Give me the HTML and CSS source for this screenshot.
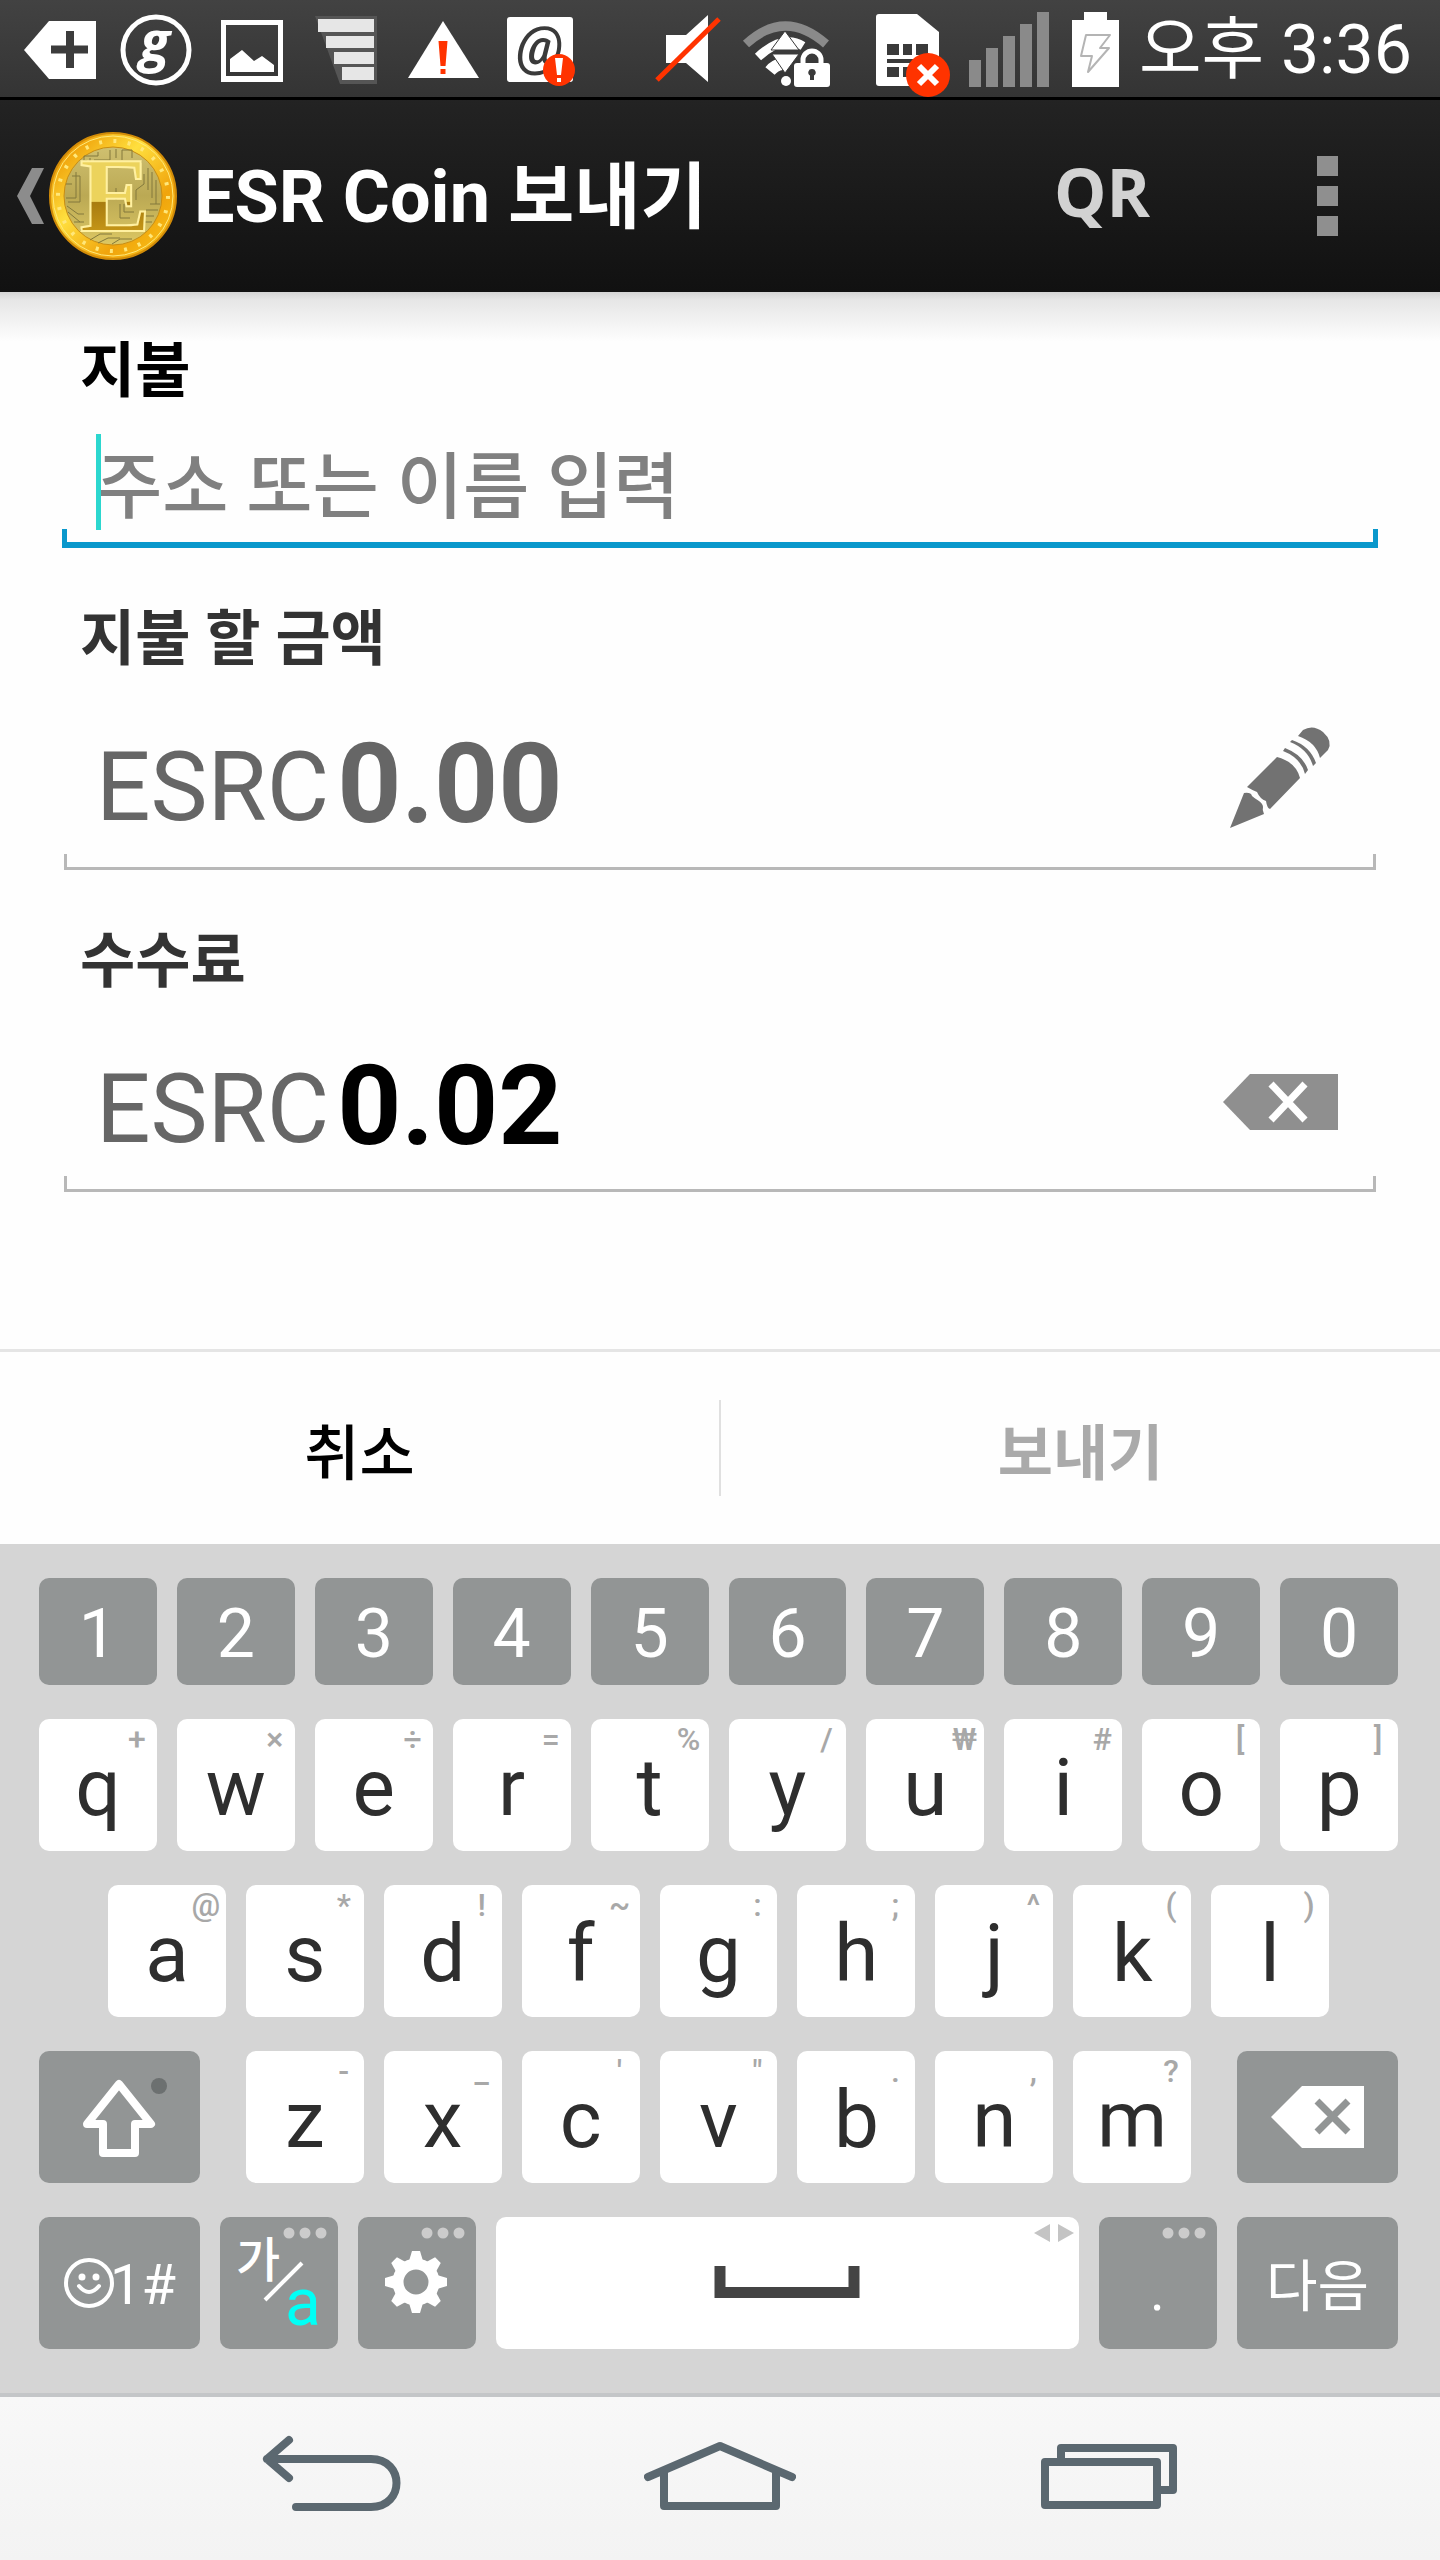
FILE: index.html
```html
<!DOCTYPE html>
<html lang="ko">
<head>
  <meta charset="UTF-8" />
  <meta name="viewport" content="width=device-width, initial-scale=1.0"/>
  <title>ESR Coin 보내기</title>
  <link rel="stylesheet" href="styles.css">
</head>
<body>
  <div class="status-bar">
    <div class="notifications">
      <svg width="72" height="97" viewBox="0 0 72 97">
        <path d="M0 50 25 21H72V79H25Z" fill="#fff"/>
        <path d="M46 31v37M27 49.500h37" stroke="#3c3c3c" stroke-width="8"/>
      </svg>
      <svg width="72" height="97" viewBox="0 0 72 97">
        <circle cx="36" cy="50" r="33" fill="none" stroke="#fff" stroke-width="5"/>
        <text x="35" y="61" class="icon-g">g</text>
      </svg>
      <svg width="72" height="97" viewBox="0 0 72 97">
        <path d="M5 20H67V82H5ZM10 25V76H62V25Z" fill="#fff" fill-rule="evenodd"/>
        <path d="M14 72V59L26 50 38 61 46 56 58 65V72Z" fill="#fff"/>
      </svg>
      <svg width="72" height="97" viewBox="0 0 72 97">
        <path d="M3 16H65V84H28Z" fill="#555"/>
        <path d="M6 19H62V32H6ZM14 36H62V48H14ZM22 52H62V64H22ZM30 67H62V80H30Z" fill="#e6e6e6"/>
      </svg>
      <svg width="72" height="97" viewBox="0 0 72 97">
        <path d="M35 21 71 78H0Z" fill="#fff"/>
        <path d="M30.500 41h9l-2 25h-5ZM32.500 69h5v5h-5Z" fill="#ff3300"/>
      </svg>
      <svg width="74" height="97" viewBox="0 0 74 97">
        <rect x="3" y="17" width="66" height="65" rx="3" fill="#fff"/>
        <text x="36" y="64" class="icon-at">@</text>
        <circle cx="55" cy="70" r="16" fill="#ff3300"/>
        <path d="M51 58h8l-2 17h-4ZM53 78h4v4h-4Z" fill="#fff"/>
      </svg>
    </div>
    <div class="system">
      <svg width="68" height="97" viewBox="0 0 68 97">
        <path d="M11 35H31L53 15V82L31 63H11Z" fill="#fff"/>
        <path d="M2 80 64 19" stroke="#ff3300" stroke-width="5"/>
      </svg>
      <svg width="96" height="97" viewBox="0 0 96 97">
        <path d="M7 44Q46 8 87 44" fill="none" stroke="#8a8a8a" stroke-width="9"/>
        <path d="M19 57Q44 34 64 46" fill="none" stroke="#fff" stroke-width="9"/>
        <path d="M31 71Q36 65 43 64" fill="none" stroke="#fff" stroke-width="12"/>
        <circle cx="47" cy="81" r="5" fill="#fff"/>
        <path d="M46 31 60 50H32ZM33 54H60L46 73Z" fill="#fff" stroke="#3a3a3a" stroke-width="1"/>
        <path d="M64 64V60a9 9 0 0 1 18 0V64" fill="none" stroke="#fff" stroke-width="5"/>
        <rect x="55" y="63" width="36" height="24" rx="3" fill="#fff"/>
        <path d="M73 69a3.500 3.500 0 0 1 2 6.500V80H71V75.500A3.500 3.500 0 0 1 73 69Z" fill="#3a3a3a"/>
      </svg>
      <svg width="102" height="100" viewBox="2 0 102 100">
        <path d="M30 14H68L90 32V83a3 3 0 0 1-3 3H30a3 3 0 0 1-3-3V17a3 3 0 0 1 3-3Z" fill="#fff"/>
        <path d="M38 44h12v11H38ZM54 44h9v11h-9ZM67 44h12v11H67ZM38 59h41v4H38ZM38 67h12v10H38ZM54 67h9v10h-9Z" fill="#3a3a3a"/>
        <circle cx="79" cy="75" r="22" fill="#ff3300"/>
        <path d="M70 66 88 84M88 66 70 84" stroke="#fff" stroke-width="6"/>
      </svg>
      <svg width="80" height="97" viewBox="0 0 80 97">
        <path d="M0 60h12v27H0ZM17 48h12v39H17ZM34 36h12v51H34ZM51 24h12v63H51ZM68 12h12v75H68Z" fill="#8a8a8a"/>
      </svg>
      <svg width="58" height="97" viewBox="0 0 58 97">
        <path d="M7 20H19V12H42V20H54V87H7Z" fill="#fff"/>
        <path d="M21 35H45L35 48H44L23 72 27 56H16Z" fill="none" stroke="#b4b4b4" stroke-width="2" stroke-linejoin="round"/>
      </svg>
      <span class="clock">오후 3:36</span>
    </div>
  </div>

  <header class="action-bar">
    <a class="up" href="#" aria-label="뒤로">
      <svg width="180" height="192" viewBox="0 0 180 192">
        <defs>
          <linearGradient id="gold" x1="0" y1="0" x2="1" y2="1">
            <stop offset="0" stop-color="#fbc81c"/>
            <stop offset=".15" stop-color="#f0a40c"/>
            <stop offset=".4" stop-color="#ffdf3e"/>
            <stop offset=".7" stop-color="#f0a40c"/>
            <stop offset="1" stop-color="#fbc81a"/>
          </linearGradient>
          <linearGradient id="face" x1="0" y1="0" x2="0" y2="1">
            <stop offset="0" stop-color="#cfc070"/>
            <stop offset=".5" stop-color="#bba954"/>
            <stop offset="1" stop-color="#dcc763"/>
          </linearGradient>
          <linearGradient id="letter" x1="0" y1="0" x2="0" y2="1">
            <stop offset=".55" stop-color="#ecd35c"/>
            <stop offset=".56" stop-color="#a87c10"/>
            <stop offset="1" stop-color="#dba91c"/>
          </linearGradient>
        </defs>
        <path d="M32 68H44L30 96 44 124H32L17 96Z" fill="#8c8c8c"/>
        <circle cx="113" cy="96" r="63" fill="url(#gold)" stroke="#d18b08" stroke-width="2"/>
        <circle cx="113" cy="96" r="60" fill="none" stroke="#ffe97a" stroke-width="1"/>
        <circle cx="113" cy="96" r="55" fill="none" stroke="#ffe77a" stroke-width="4" stroke-dasharray="3 11.400"/>
        <circle cx="113" cy="96" r="49" fill="url(#face)" stroke="#c98d12" stroke-width="1"/>
        <g fill="none" stroke="#83793c" stroke-width="1">
          <path d="M72 76H80V102H68M76 72V98H66M66 84H72M84 62V56H98V52M94 60H110V50M116 58V49M122 60V50H132V58M128 62H142"/>
          <path d="M148 68V90M152 72V98M156 80V104M144 74V84L136 90V100M150 104H160M146 110H158M144 116H154M124 66H140V76"/>
          <path d="M67 106 78 114H84M68 112 80 122M74 122H84M80 130H90M90 140 100 134H112M98 143 108 138H120M112 144 120 139H132M132 130 142 122H152"/>
          <path d="M120 104V118H130M124 104V112H134M116 88V100M86 60V66M90 58V64"/>
        </g>
        <text x="115" y="131" class="coin-letter">E</text>
      </svg>
    </a>
    <h1>ESR Coin 보내기</h1>
    <button class="qr" type="button">QR</button>
    <button class="overflow" type="button" aria-label="메뉴">
      <svg width="22" height="80" viewBox="0 0 22 80">
        <path d="M0 0h21v20H0ZM0 30h21v20H0ZM0 60h21v20H0Z" fill="#8f8f8f"/>
      </svg>
    </button>
  </header>

  <form class="send-form">
    <div class="fields">
      <label class="label-active" for="address">지불</label>
      <div class="field field-focused">
        <span class="caret"></span>
        <input type="text" id="address" placeholder="주소 또는 이름 입력" />
      </div>

      <label for="amount">지불 할 금액</label>
      <div class="field field-amount">
        <span class="currency">ESRC</span>
        <input type="text" id="amount" placeholder="0.00" />
        <button type="button" aria-label="편집">
          <svg width="116" height="120" viewBox="0 0 116 120">
            <g fill="#727272">
              <path d="M0 111 14 76Q21 75 22 79 24 81 29 84 33 87 33 90 32 93 34 97Z"/>
              <path d="M17 70 47 40Q66 45 70 61L40 92Q37 91 36 84 30 82 27 75 22 73 17 70Z"/>
              <path d="M53 34 55 31Q73 38 78 53L75 57Q71 41 53 34Z"/>
              <path d="M60 25 62 23Q80 29 86 46L83 49Q78 32 60 25Z"/>
              <path d="M68 19 73 13Q83 7 93 15 103 24 98 33L90 41Q86 25 68 19Z"/>
            </g>
          </svg>
        </button>
      </div>

      <label for="fee">수수료</label>
      <div class="field field-amount">
        <span class="currency">ESRC</span>
        <input type="text" id="fee" value="0.02" />
        <button type="button" aria-label="지우기">
          <svg width="123" height="62" viewBox="0 -6 123 62">
            <path d="M0 28 27 0H115V56H27Z" fill="#8f8f8f"/>
            <path d="M48 10 82 46M82 10 48 46" stroke="#fff" stroke-width="7"/>
          </svg>
        </button>
      </div>
    </div>

    <div class="actions">
      <button type="button">취소</button>
      <button type="submit" disabled>보내기</button>
    </div>
  </form>

  <div class="keyboard">
    <div class="row">
      <button class="key key-num">1</button>
      <button class="key key-num">2</button>
      <button class="key key-num">3</button>
      <button class="key key-num">4</button>
      <button class="key key-num">5</button>
      <button class="key key-num">6</button>
      <button class="key key-num">7</button>
      <button class="key key-num">8</button>
      <button class="key key-num">9</button>
      <button class="key key-num">0</button>
    </div>
    <div class="row">
      <button class="key">q<span class="hint">+</span></button>
      <button class="key">w<span class="hint">×</span></button>
      <button class="key">e<span class="hint">÷</span></button>
      <button class="key">r<span class="hint">=</span></button>
      <button class="key">t<span class="hint">%</span></button>
      <button class="key">y<span class="hint">/</span></button>
      <button class="key">u<span class="hint">₩</span></button>
      <button class="key">i<span class="hint">#</span></button>
      <button class="key">o<span class="hint">[</span></button>
      <button class="key">p<span class="hint">]</span></button>
    </div>
    <div class="row row-home">
      <button class="key">a<span class="hint">@</span></button>
      <button class="key">s<span class="hint">*</span></button>
      <button class="key">d<span class="hint">!</span></button>
      <button class="key">f<span class="hint">~</span></button>
      <button class="key">g<span class="hint">:</span></button>
      <button class="key">h<span class="hint">;</span></button>
      <button class="key">j<span class="hint">^</span></button>
      <button class="key">k<span class="hint">(</span></button>
      <button class="key">l<span class="hint">)</span></button>
    </div>
    <div class="row">
      <button class="key key-dark key-wide" aria-label="Shift">
        <svg width="161" height="132" viewBox="0 0 161 132">
          <path d="M80 33 112 73H96V102H64V73H48Z" fill="none" stroke="#fff" stroke-width="8" stroke-linejoin="round"/>
          <circle cx="120" cy="35" r="8" fill="#6c7070"/>
        </svg>
      </button>
      <div class="row row-letters">
        <button class="key">z<span class="hint">-</span></button>
        <button class="key">x<span class="hint">_</span></button>
        <button class="key">c<span class="hint">'</span></button>
        <button class="key">v<span class="hint">"</span></button>
        <button class="key">b<span class="hint">.</span></button>
        <button class="key">n<span class="hint">,</span></button>
        <button class="key">m<span class="hint">?</span></button>
      </div>
      <button class="key key-dark key-wide" aria-label="Backspace">
        <svg width="161" height="132" viewBox="0 0 161 132">
          <path d="M34 66 65 35H127V97H65Z" fill="#fff"/>
          <path d="M80 50 111 81M111 50 80 81" stroke="#929595" stroke-width="7"/>
        </svg>
      </button>
    </div>
    <div class="row">
      <button class="key key-dark key-wide" aria-label="기호">
        <svg width="161" height="132" viewBox="0 0 161 132">
          <circle cx="50" cy="66" r="23" fill="none" stroke="#fff" stroke-width="4"/>
          <circle cx="43" cy="60" r="3.500" fill="#fff"/>
          <circle cx="57" cy="60" r="3.500" fill="#fff"/>
          <path d="M40 69Q50 81 60 69" fill="none" stroke="#fff" stroke-width="4" stroke-linecap="round"/>
          <text x="71" y="87" class="key-symbols">1#</text>
        </svg>
      </button>
      <button class="key key-dark" aria-label="한/영">
        <svg width="118" height="132" viewBox="0 0 118 132">
          <g fill="#ccc"><circle cx="69" cy="16" r="5.500"/><circle cx="85" cy="16" r="5.500"/><circle cx="101" cy="16" r="5.500"/></g>
          <text x="16" y="60" class="key-ko">가</text>
          <path d="M45 83 82 46" stroke="#fff" stroke-width="4"/>
          <text x="65" y="108" class="key-en">a</text>
        </svg>
      </button>
      <button class="key key-dark" aria-label="설정">
        <svg width="118" height="132" viewBox="0 0 118 132">
          <g fill="#ccc"><circle cx="69" cy="16" r="5.500"/><circle cx="85" cy="16" r="5.500"/><circle cx="101" cy="16" r="5.500"/></g>
          <g transform="translate(58 65)">
            <circle r="18" fill="none" stroke="#fff" stroke-width="11"/>
            <g fill="#fff">
              <path id="tooth" d="M-7-21-4-31H4L7-21Z"/>
              <use href="#tooth" transform="rotate(45)"/>
              <use href="#tooth" transform="rotate(90)"/>
              <use href="#tooth" transform="rotate(135)"/>
              <use href="#tooth" transform="rotate(180)"/>
              <use href="#tooth" transform="rotate(225)"/>
              <use href="#tooth" transform="rotate(270)"/>
              <use href="#tooth" transform="rotate(315)"/>
            </g>
          </g>
        </svg>
      </button>
      <button class="key key-space" aria-label="Space">
        <svg width="146" height="132" viewBox="0 0 146 132">
          <path d="M6 49V75.500H140V49" fill="none" stroke="#444" stroke-width="11"/>
        </svg>
        <svg class="cursor-hint" width="40" height="20" viewBox="0 0 40 20">
          <path d="M0 10 16 1V19ZM40 10 24 1V19Z" fill="#c4c4c4"/>
        </svg>
      </button>
      <button class="key key-dark" aria-label="마침표">
        <svg width="118" height="132" viewBox="0 0 118 132">
          <g fill="#ccc"><circle cx="69" cy="16" r="5.500"/><circle cx="85" cy="16" r="5.500"/><circle cx="101" cy="16" r="5.500"/></g>
          <text x="51" y="93" class="key-symbols">.</text>
        </svg>
      </button>
      <button class="key key-dark key-wide key-next">다음</button>
    </div>
  </div>

  <nav class="nav-bar">
    <button type="button" aria-label="Back">
      <svg width="152" height="163" viewBox="0 0 152 163">
        <path d="M34 43 12 62 34 81M12 62H116C150 62 150 110 116 110H41" fill="none" stroke="#5b6870" stroke-width="8" stroke-linecap="round" stroke-linejoin="round"/>
      </svg>
    </button>
    <button type="button" aria-label="Home">
      <svg width="152" height="163" viewBox="0 0 152 163">
        <path d="M4 80 76 49 148 80M20 75V109H132V75" fill="none" stroke="#5b6870" stroke-width="8" stroke-linecap="round" stroke-linejoin="round"/>
      </svg>
    </button>
    <button type="button" aria-label="Recents">
      <svg width="152" height="163" viewBox="0 0 152 163">
        <path d="M12 65H124V108H12ZM28 65V51H140V93H124" fill="none" stroke="#5b6870" stroke-width="8" stroke-linejoin="round"/>
      </svg>
    </button>
  </nav>
</body>
</html>
```
FILE: styles.css
```css
* {
  box-sizing: border-box;
}
body {
  margin: 0;
  min-height: 100vh;
  display: flex;
  flex-direction: column;
  background: #fefefe;
  font-family: Roboto, "Noto Sans CJK KR", sans-serif;
}
button, input {
  margin: 0;
  padding: 0;
  border: none;
  background: none;
  font-family: inherit;
  color: inherit;
}
svg {
  display: block;
  flex: none;
}

/* status bar */
.status-bar {
  display: flex;
  justify-content: space-between;
  height: 100px;
  padding: 0 28px 0 24px;
  background: linear-gradient(#424242, #343434);
  border-bottom: 3px solid #000;
  color: #fff;
}
.notifications, .system {
  display: flex;
}
.notifications {
  gap: 24px;
}
.system {
  gap: 16px;
}
.clock {
  font-size: 68px;
  line-height: 100px;
  white-space: nowrap;
}
.icon-g {
  font: italic bold 56px "Open Sans", sans-serif;
  text-anchor: middle;
  fill: #fff;
}
.icon-at {
  font: italic 500 54px Roboto, sans-serif;
  text-anchor: middle;
  fill: #3a3a3a;
}

/* action bar */
.action-bar {
  display: flex;
  align-items: center;
  height: 192px;
  background: linear-gradient(#232323, #111);
  color: #fff;
}
h1 {
  flex: 1;
  margin: 0;
  padding: 4px 0 0 14px;
  font-size: 72px;
  line-height: 96px;
  font-weight: 700;
}
.coin-letter {
  font: bold 106px "Liberation Serif", serif;
  text-anchor: middle;
  fill: url(#letter);
  stroke: #fff0a0;
  stroke-width: 2px;
}
.qr {
  width: 228px;
  padding-bottom: 10px;
  font-family: "Open Sans", sans-serif;
  font-size: 66px;
  line-height: 96px;
  font-weight: 700;
  color: #d2d2d2;
}
.overflow {
  display: flex;
  justify-content: center;
  width: 224px;
}

/* form */
.send-form {
  background: linear-gradient(#d4d4d4, #e6e6e6 8px, #fefefe 50px);
}
.fields {
  padding: 44px 62px 157px;
}
label {
  display: block;
  margin-top: 56px;
  padding-left: 18px;
  font-size: 60px;
  line-height: 72px;
  font-weight: 700;
  color: #333;
}
.label-active {
  margin-top: 0;
  color: #000;
}
.field {
  --line: #b8b8b8;
  --thickness: 3px;
  position: relative;
  display: flex;
  align-items: center;
  background:
    linear-gradient(var(--line), var(--line)) left bottom / var(--thickness) 16px no-repeat,
    linear-gradient(var(--line), var(--line)) right bottom / var(--thickness) 16px no-repeat,
    linear-gradient(var(--line), var(--line)) left bottom / 100% 3px no-repeat;
}
.field-focused {
  --line: #0a98cc;
  height: 122px;
  margin-top: 18px;
  padding-left: 34px;
  background-size: 5px 19px, 5px 19px, 100% 6px;
}
.field input {
  flex: 1;
  min-width: 0;
  outline: none;
}
.field-focused input {
  height: 100px;
  font-size: 72px;
  font-weight: 500;
}
input::placeholder {
  color: #808080;
  opacity: 1;
}
.caret {
  position: absolute;
  left: 34px;
  top: 8px;
  width: 5px;
  height: 96px;
  background: #2cd7cf;
}
.field-amount {
  height: 194px;
  margin: 0 2px;
  padding: 28px 30px 0 32px;
}
.currency {
  font-size: 96px;
  line-height: 120px;
  color: #666;
}
.field-amount input {
  height: 132px;
  margin-left: 8px;
  padding-bottom: 8px;
  font-size: 112px;
  font-weight: 700;
  color: #000;
}
.field-amount input::placeholder {
  color: #666;
}
.field-amount button {
  padding-bottom: 20px;
}
.actions {
  display: flex;
  padding: 48px 0;
  border-top: 3px solid #e5e5e5;
  background: #fefefe;
}
.actions button {
  flex: 1;
  height: 96px;
  font-size: 60px;
  font-weight: 500;
  color: #000;
}
.actions button + button {
  border-left: 2px solid #e0e0e0;
}
.actions button:disabled {
  font-weight: 700;
  color: #aaa;
}

/* keyboard */
.keyboard {
  display: flex;
  flex-direction: column;
  gap: 34px;
  padding: 34px 42px 44px 39px;
  background: #d5d5d5;
  border-bottom: 4px solid #c4c6c8;
}
.row {
  display: flex;
  gap: 20px;
}
.row-home {
  padding: 0 69px;
}
.row-letters {
  flex: 946;
  margin: 0 26px;
}
.key {
  position: relative;
  display: flex;
  flex: 118 1 0;
  min-width: 0;
  height: 132px;
  align-items: center;
  justify-content: center;
  padding-top: 6px;
  border-radius: 10px;
  background: #fff;
  color: #2e2e2e;
  font-size: 80px;
  line-height: 96px;
}
.key-num {
  height: 107px;
  padding-top: 4px;
  background: #929595;
  color: #fff;
  font-size: 68px;
}
.key-dark {
  padding-top: 0;
  background: #929595;
  color: #fff;
}
.key-wide {
  flex-grow: 161;
}
.key-space {
  flex-grow: 584;
  padding-top: 0;
}
.key-next {
  padding-top: 8px;
  font-size: 56px;
}
.hint {
  position: absolute;
  top: 0;
  right: 0;
  width: 40px;
  font-size: 32px;
  line-height: 40px;
  font-weight: 500;
  text-align: center;
  color: #a8a8a8;
}
.cursor-hint {
  position: absolute;
  top: 6px;
  right: 5px;
}
.key-symbols {
  font-size: 56px;
  fill: #fff;
}
.key-ko {
  font-size: 48px;
  font-weight: 500;
  fill: #fff;
}
.key-en {
  font-size: 66px;
  fill: #00fff6;
}

/* navigation */
.nav-bar {
  flex: 1;
  display: flex;
  align-items: center;
  justify-content: center;
  gap: 237px;
  background: linear-gradient(#f8f8f8, #f3f3f3);
}
```
